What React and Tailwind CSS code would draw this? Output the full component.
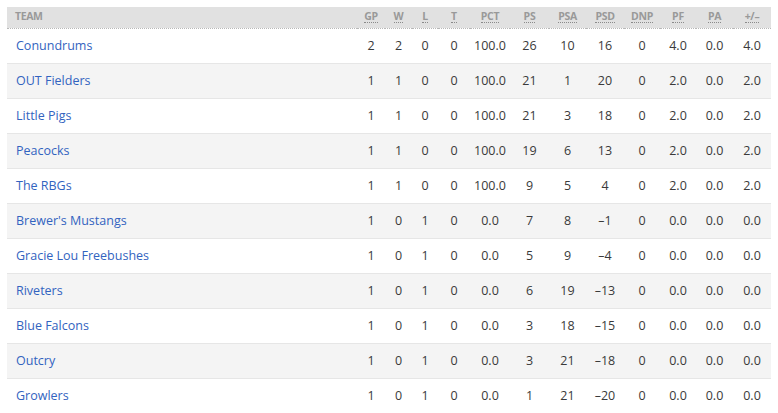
const columns = [
  { key: 'gp', label: 'GP', width: 'w-[28px]' },
  { key: 'w', label: 'W', width: 'w-[27px]' },
  { key: 'l', label: 'L', width: 'w-[26px]' },
  { key: 't', label: 'T', width: 'w-[32px]' },
  { key: 'pct', label: 'PCT', width: 'w-[40px]' },
  { key: 'ps', label: 'PS', width: 'w-[39px]' },
  { key: 'psa', label: 'PSA', width: 'w-[37px]' },
  { key: 'psd', label: 'PSD', width: 'w-[38px]' },
  { key: 'dnp', label: 'DNP', width: 'w-[36px]' },
  { key: 'pf', label: 'PF', width: 'w-[36px]' },
  { key: 'pa', label: 'PA', width: 'w-[37px]' },
  { key: 'pm', label: '+/\u2013', width: 'w-[38px]' },
]

const teams = [
  ['Conundrums', 2, 2, 0, 0, '100.0', 26, 10, '16', 0, '4.0', '0.0', '4.0'],
  ['OUT Fielders', 1, 1, 0, 0, '100.0', 21, 1, '20', 0, '2.0', '0.0', '2.0'],
  ['Little Pigs', 1, 1, 0, 0, '100.0', 21, 3, '18', 0, '2.0', '0.0', '2.0'],
  ['Peacocks', 1, 1, 0, 0, '100.0', 19, 6, '13', 0, '2.0', '0.0', '2.0'],
  ['The RBGs', 1, 1, 0, 0, '100.0', 9, 5, '4', 0, '2.0', '0.0', '2.0'],
  ["Brewer's Mustangs", 1, 0, 1, 0, '0.0', 7, 8, '\u20131', 0, '0.0', '0.0', '0.0'],
  ['Gracie Lou Freebushes', 1, 0, 1, 0, '0.0', 5, 9, '\u20134', 0, '0.0', '0.0', '0.0'],
  ['Riveters', 1, 0, 1, 0, '0.0', 6, 19, '\u201313', 0, '0.0', '0.0', '0.0'],
  ['Blue Falcons', 1, 0, 1, 0, '0.0', 3, 18, '\u201315', 0, '0.0', '0.0', '0.0'],
  ['Outcry', 1, 0, 1, 0, '0.0', 3, 21, '\u201318', 0, '0.0', '0.0', '0.0'],
  ['Growlers', 1, 0, 1, 0, '0.0', 1, 21, '\u201320', 0, '0.0', '0.0', '0.0'],
]

export default function App() {
  return (
    <div className="min-h-[413px] bg-white p-[7px] font-['Open_Sans','Liberation_Sans',sans-serif] text-[12.5px] text-[#3a3a3a]">
      <table className="w-[764px] table-fixed border-collapse">
        <thead>
          <tr className="h-[21px] bg-[#e1e1e1] border-b border-dotted border-[#b8b8b8]">
            <th className="w-[350px] pl-[8px] text-left text-[10.5px] font-bold uppercase text-[#999] tracking-[-0.4px]">
              Team
            </th>
            {columns.map((c) => (
              <th
                key={c.key}
                className={`${c.width} text-center text-[10.5px] font-bold text-[#999] tracking-[-0.3px]`}
              >
                <abbr className="border-b border-dotted border-[#8a8a8a] leading-[11px] inline-block no-underline">
                  {c.label}
                </abbr>
              </th>
            ))}
          </tr>
        </thead>
        <tbody>
          {teams.map((row, i) => (
            <tr
              key={row[0]}
              className={`h-[35px] border-b border-[#e6e6e6] ${i % 2 === 1 ? 'bg-[#f4f4f4]' : 'bg-white'}`}
            >
              <td className="pl-[9px] pt-[2px] text-left">
                <a className="text-[#3263c0] cursor-pointer">{row[0]}</a>
              </td>
              {row.slice(1).map((v, j) => (
                <td key={j} className="pt-[2px] text-center">
                  {v}
                </td>
              ))}
            </tr>
          ))}
        </tbody>
      </table>
    </div>
  )
}
